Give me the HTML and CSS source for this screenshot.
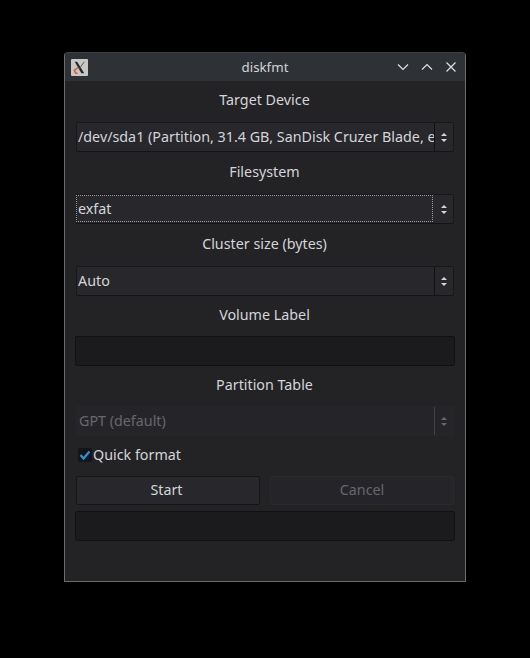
FILE: index.html
```html
<!DOCTYPE html>
<html>
<head>
<title>diskfmt</title>
<link rel="stylesheet" href="styles.css">
</head>
<body>
<div class="window">
  <div class="titlebar">
    <svg class="app-icon" width="17" height="17" viewBox="0 0 18 18">
      <rect width="18" height="18" rx="1" fill="#c9c7c4"/>
      <path d="M4 3 L6.5 3 L14 15 L11 15 Z" fill="#26262a"/>
      <path d="M14 3 L9 10" stroke="#55555a" stroke-width="1"/>
      <path d="M7.5 9 L3.5 12 L5 15 L7 15" stroke="#c8654a" stroke-width="1.6" fill="none"/>
    </svg>
    <div class="title">diskfmt</div>
    <div class="window-buttons">
      <svg width="12" height="12" viewBox="0 0 12 12"><path d="M1 3.5 L6 8.5 L11 3.5" class="glyph"/></svg>
      <svg width="12" height="12" viewBox="0 0 12 12"><path d="M1 8.5 L6 3.5 L11 8.5" class="glyph"/></svg>
      <svg width="12" height="12" viewBox="0 0 12 12"><path d="M1.5 1.5 L10.5 10.5 M10.5 1.5 L1.5 10.5" class="glyph"/></svg>
    </div>
  </div>
  <div class="content">
    <div class="label first">Target Device</div>
    <div class="combo">
      <div class="combo-text">/dev/sda1 (Partition, 31.4 GB, SanDisk Cruzer Blade, exfat)</div>
      <div class="combo-arrows"><span class="up"></span><span class="down"></span></div>
    </div>
    <div class="label">Filesystem</div>
    <div class="combo focused">
      <div class="combo-text">exfat</div>
      <div class="combo-arrows"><span class="up"></span><span class="down"></span></div>
    </div>
    <div class="label">Cluster size (bytes)</div>
    <div class="combo">
      <div class="combo-text">Auto</div>
      <div class="combo-arrows"><span class="up"></span><span class="down"></span></div>
    </div>
    <div class="label short">Volume Label</div>
    <div class="field"></div>
    <div class="label short">Partition Table</div>
    <div class="combo disabled">
      <div class="combo-text">GPT (default)</div>
      <div class="combo-arrows"><span class="up"></span><span class="down"></span></div>
    </div>
    <div class="check-row">
      <span class="checkbox">
        <svg width="12" height="12" viewBox="0 0 12 12"><path d="M1.5 6 L4.5 9.5 L10.5 2.5" fill="none" stroke="#2a93d3" stroke-width="2.2"/></svg>
      </span>
      <span>Quick format</span>
    </div>
    <div class="button-row">
      <div class="button start">Start</div>
      <div class="button disabled">Cancel</div>
    </div>
    <div class="field progress"></div>
  </div>
</div>
</body>
</html>
```

FILE: styles.css
```css
/* Dark desktop window */
body {
  margin: 0;
  background-color: #000;
  color: #d3d5d8;
  font-family: "Noto Sans", sans-serif;
  font-size: 14.3px;
  padding: 52px 0 0 64px;
}

.window {
  box-sizing: border-box;
  width: 402px;
  height: 530px;
  background-color: #232326;
  border: 1px solid #6a6c6e;
  border-top-color: #3c3f43;
  border-radius: 4px 4px 0 0;
}

.titlebar {
  display: grid;
  grid-template-columns: 1fr auto 1fr;
  align-items: center;
  height: 28px;
  background-color: #2e3135;
  padding: 0 8px 0 6px;
}

.title {
  font-size: 13.3px;
  line-height: 28px;
  padding-left: 2px;
}

.window-buttons {
  display: flex;
  justify-content: flex-end;
  gap: 12px;
}

.glyph {
  fill: none;
  stroke: #dfe1e3;
  stroke-width: 1.2;
}

.content {
  padding: 0 10px;
}

.label {
  text-align: center;
  height: 19px;
  line-height: 17px;
  padding-right: 1px;
  margin: 11px 0 12px;
}

.label.first {
  margin-top: 10px;
}

.label.short {
  margin: 10px 0 11px;
}

.combo {
  display: flex;
  height: 28px;
  margin: 0 1px;
  background-color: #28282c;
  border: 1px solid #18181b;
  border-bottom-color: #141417;
  border-radius: 2px;
}

.combo-text {
  flex: 1;
  min-width: 0;
  overflow: hidden;
  white-space: nowrap;
  line-height: 27px;
  padding-left: 1px;
}

.combo-arrows {
  flex: none;
  width: 18px;
  border-left: 1px solid #111114;
  display: flex;
  flex-direction: column;
  align-items: center;
  justify-content: center;
  gap: 3px;
}

.up {
  border-left: 3px solid transparent;
  border-right: 3px solid transparent;
  border-bottom: 3px solid #d3d5d8;
}

.down {
  border-left: 3px solid transparent;
  border-right: 3px solid transparent;
  border-top: 3px solid #d3d5d8;
}

.combo.focused .combo-text {
  margin: 1px 2px 2px 0;
  line-height: 25px;
  outline: 1px dotted #9a9c9e;
}

.combo.focused .combo-arrows {
  border-left-color: transparent;
}

.combo.disabled {
  background-color: #252529;
  border-color: #26262a;
  color: #66686b;
}

.combo.disabled .combo-text {
  padding-left: 2px;
}

.combo.disabled .combo-arrows {
  border-left-color: #444;
}

.combo.disabled .up {
  border-bottom-color: #66686b;
}

.combo.disabled .down {
  border-top-color: #66686b;
}

.field {
  height: 28px;
  background-color: #1b1b1e;
  border: 1px solid #111114;
  border-radius: 2px;
}

.check-row {
  display: flex;
  align-items: center;
  gap: 1px;
  height: 20px;
  line-height: 18px;
  margin: 9px 0 11px 3px;
}

.checkbox {
  display: flex;
  align-items: center;
  justify-content: center;
  width: 14px;
  height: 14px;
  background-color: #14151a;
  border-radius: 2px;
}

.button-row {
  display: flex;
  gap: 10px;
  margin: 0 1px;
}

.button {
  flex: 1;
  height: 27px;
  line-height: 26px;
  text-align: center;
  background-color: #28282c;
  border: 1px solid #151518;
  border-radius: 2px;
}

.button.start {
  text-indent: -3px;
}

.button.disabled {
  background-color: #252529;
  border-color: #2a2a2e;
  color: #66686b;
}

.progress {
  margin-top: 6px;
}
```
